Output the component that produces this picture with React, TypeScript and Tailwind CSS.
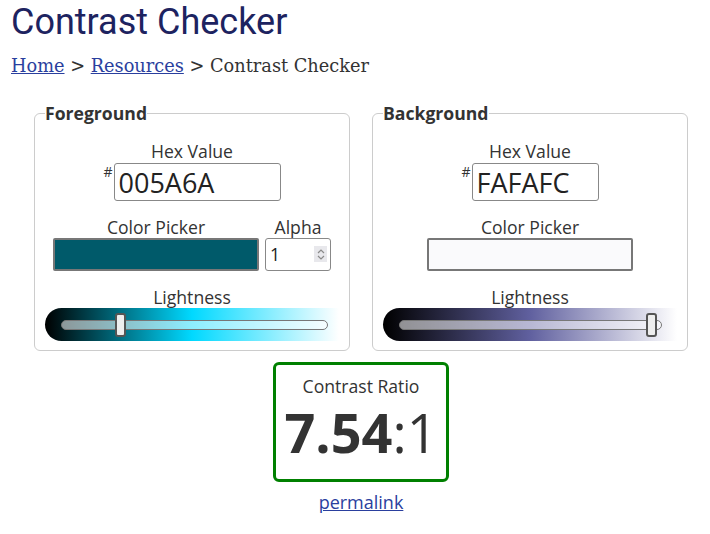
import React from "react";

const sans = "font-['Open_Sans',sans-serif]";

function Slider({ gradient, thumb, right }: { gradient: string; thumb: number; right: number }) {
  return (
    <div
      className="relative h-[33px] w-full rounded-l-full"
      style={{ background: gradient }}
    >
      <div
        className="absolute left-[16px] top-[12px] h-[10px] rounded-full border border-[#777] bg-white/55"
        style={{ right }}
      />
      <div
        className="absolute top-[5px] h-[24px] w-[11px] rounded-[3px] border-2 border-[#555] bg-[#eee]"
        style={{ left: thumb }}
      />
    </div>
  );
}

function Panel({
  title,
  hex,
  color,
  gradient,
  thumb,
  right,
  alpha,
}: {
  title: string;
  hex: string;
  color: string;
  gradient: string;
  thumb: number;
  right: number;
  alpha?: boolean;
}) {
  return (
    <fieldset className="w-[316px] rounded-md border border-[#ccc] px-[10px] pb-[9px] pt-[15px]">
      <legend className="px-0 text-[17.6px] font-bold leading-[22px] text-[#333]">
        {title}
      </legend>
      <div className="flex flex-col items-center">
        <div className="text-[17.6px] leading-[24px] text-[#333]">Hex Value</div>
        <div className="flex items-start">
          <span className="mt-[2px] mr-[1px] text-[14px] leading-[14px] text-[#333]">#</span>
          <input
            readOnly
            value={hex}
            className={`${alpha ? "w-[167px]" : "w-[127px]"} h-[38px] rounded-[3px] border border-[#888] px-[4px] text-[27px] leading-[36px] text-[#222] outline-none`}
          />
        </div>
      </div>
      <div className="mt-[15px] flex items-end justify-center gap-[6px]">
        <div className="flex flex-col items-center">
          <div className="text-[17.6px] leading-[22px] text-[#333]">Color Picker</div>
          <div
            className="h-[33px] w-[206px] rounded-[2px] border-2 border-[#777]"
            style={{ backgroundColor: color }}
          />
        </div>
        {alpha && (
          <div className="flex flex-col items-center">
            <div className="text-[17.6px] leading-[22px] text-[#333]">Alpha</div>
            <div className="relative h-[33px] w-[66px] rounded-[3px] border border-[#888] bg-white">
              <span className="absolute left-[4px] top-[3px] text-[17.6px] leading-[24px] text-[#222]">1</span>
              <div className="absolute right-[3px] top-[7px] flex h-[16px] w-[13px] flex-col items-center justify-center bg-[#e8e8ec]">
                <svg width="8" height="13" viewBox="0 0 8 13" fill="none" stroke="#8a8a8a" strokeWidth="1.2">
                  <path d="M1 5 L4 2 L7 5" />
                  <path d="M1 8 L4 11 L7 8" />
                </svg>
              </div>
            </div>
          </div>
        )}
      </div>
      <div className="mt-[15px] text-center text-[17.6px] leading-[22px] text-[#333]">Lightness</div>
      <Slider gradient={gradient} thumb={thumb} right={right} />
    </fieldset>
  );
}

export default function App() {
  return (
    <div className={`min-h-[534px] w-[710px] bg-white ${sans}`}>
      <div className="px-[11px] pt-[1px]">
        <h1 className="font-['Roboto',sans-serif] text-[36px] leading-[42px] text-[#1d2360]">
          Contrast Checker
        </h1>
        <nav className="mt-[11px] font-['DejaVu_Serif',serif] text-[17.75px] leading-[24px] text-[#333]">
          <a href="#" className="text-[#2a3f9e] underline">Home</a>
          {" > "}
          <a href="#" className="text-[#2a3f9e] underline">Resources</a>
          {" > Contrast Checker"}
        </nav>
      </div>
      <div className="ml-[34px] mt-[24px] w-[654px]">
        <div className="flex justify-between">
          <Panel
            title="Foreground"
            hex="005A6A"
            color="#005a6a"
            gradient="linear-gradient(to right, #000, #00d9ff 50%, #fff)"
            thumb={70}
            right={11}
            alpha
          />
          <Panel
            title="Background"
            hex="FAFAFC"
            color="#fafafc"
            gradient="linear-gradient(to right, #000, #60609f 50%, #fff)"
            thumb={263}
            right={15}
          />
        </div>
        <div className="mt-[11px] flex flex-col items-center">
          <div className="flex h-[120px] w-[176px] flex-col items-center rounded-md border-[3px] border-[#008000]">
            <div className="mt-[9px] text-[17.6px] leading-[24px] text-[#333]">Contrast Ratio</div>
            <div className="mt-[7px] text-[54px] leading-[54px] text-[#333]">
              <span className="font-bold">7.54</span>:1
            </div>
          </div>
          <a href="#" className="mt-[8px] text-[18px] leading-[24px] text-[#2a3f9e] underline">
            permalink
          </a>
        </div>
      </div>
    </div>
  );
}
